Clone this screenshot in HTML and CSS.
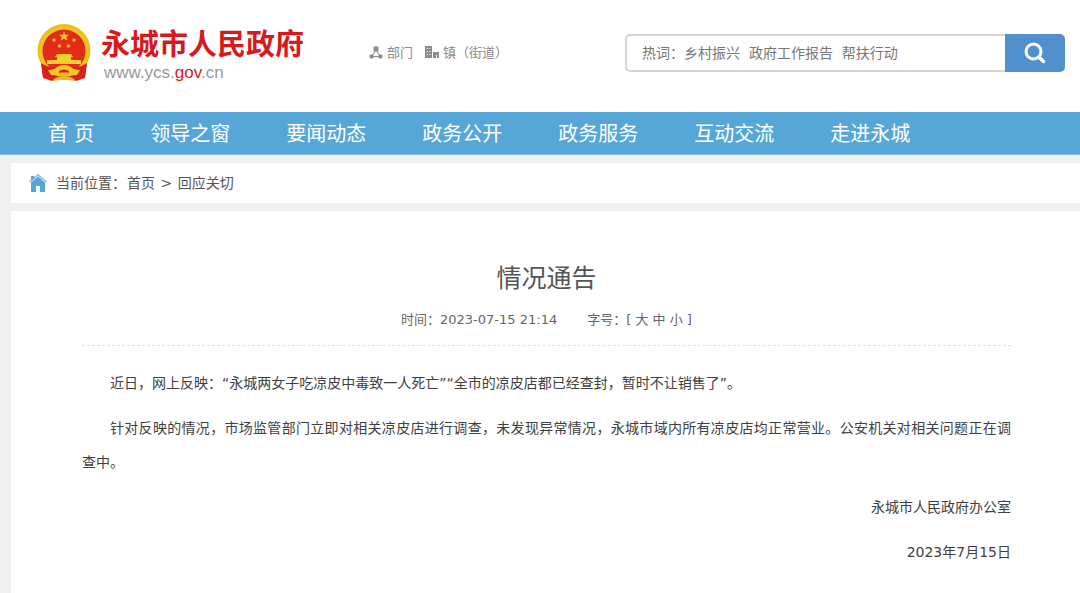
FILE: index.html
```html
<!DOCTYPE html>
<html lang="zh-CN">
<head>
<meta charset="utf-8">
<meta name="viewport" content="width=device-width, initial-scale=1">
<title>情况通告 - 永城市人民政府</title>
<link rel="stylesheet" href="styles.css">
</head>
<body>
<header class="header">
  <a class="brand" href="#">
    <svg class="emblem" viewBox="0 0 54 58" aria-hidden="true">
      <path d="M4 37L6 54 15 57 27 54 39 57 48 54 50 37Z" fill="#d9201a"/>
      <circle cx="27" cy="26.500" r="26.500" fill="#f2c420"/>
      <circle cx="27" cy="26.500" r="25" fill="none" stroke="#e9b922" stroke-width="1"/>
      <circle cx="27" cy="27" r="21.500" fill="#e22b18"/>
      <path d="M27 7l1.300 3.700h3.900l-3.100 2.300 1.200 3.700-3.300-2.200-3.300 2.200 1.200-3.700-3.100-2.300h3.900z" fill="#f6c62b"/>
      <g fill="#eeb32a"><circle cx="17" cy="16" r="1.800"/><circle cx="37" cy="16" r="1.800"/><circle cx="22.500" cy="22" r="1.800"/><circle cx="31.500" cy="22" r="1.800"/></g>
      <path d="M20 30h14l2 3h-2v3h10v4H10v-4h10v-3h-2z" fill="#f8d02e"/>
      <path d="M4 39q7 5 14 4l2 5-5 6-9-1zM50 39q-7 5-14 4l-2 5 5 6 9-1z" fill="#d9201a"/>
      <path d="M11 46q6 0 9-3 7-4 14 0 3 3 9 3l-3 5q-5 1-8-2-5-3-10 0-3 3-8 2z" fill="#f3c725"/>
      <path d="M22 47q5-3 10 0v2q-5-2-10 0z" fill="#d9201a"/>
      <path d="M15 57q3-4 8-4h8q5 0 8 4l-7-1h-10z" fill="#efbd21"/>
    </svg>
    <span class="brand-text">
      <span class="brand-name">永城市人民政府</span>
      <span class="brand-url">www.ycs.<span class="brand-gov">gov</span>.cn</span>
    </span>
  </a>
  <div class="quick">
    <a class="quick-link" href="#">
      <svg class="quick-icon" viewBox="0 0 14 14" aria-hidden="true"><path d="M7 4L3 10M7 4l4 6M3 10.500h8" fill="none" stroke="#8c8c8c" stroke-width="1"/><path d="M5.500 1.500h3v3h-3zM1.500 9.500h2v2h-2zM10.500 9.500h2v2h-2z" fill="#8c8c8c" stroke="#8c8c8c" stroke-width="2" stroke-linejoin="round"/></svg>
      部门
    </a>
    <a class="quick-link" href="#">
      <svg class="quick-icon" viewBox="0 0 14 14" aria-hidden="true"><path d="M0 0h7v12H0zM8 6h6v6h-2V9h-1v3H8z" fill="#8c8c8c"/><path d="M1.500 2.500h4M1.500 5.500h4M1.500 8.500h4" stroke="#ddd" stroke-width="1" stroke-dasharray="1.500 1"/></svg>
      镇（街道）
    </a>
  </div>
  <form class="search" role="search">
    <input class="search-input" type="text" aria-label="搜索" value="热词：乡村振兴  政府工作报告  帮扶行动">
    <button class="search-button" type="button" aria-label="搜索">
      <svg class="search-icon" viewBox="0 0 22 22" aria-hidden="true"><circle cx="9.500" cy="9.500" r="7.500" fill="none" stroke="#fff" stroke-width="3"/><path d="M15 15l4.500 4.500" stroke="#fff" stroke-width="3.500" stroke-linecap="round"/></svg>
    </button>
  </form>
</header>
<nav class="nav">
  <a class="nav-link" href="#">首 页</a>
  <a class="nav-link" href="#">领导之窗</a>
  <a class="nav-link" href="#">要闻动态</a>
  <a class="nav-link" href="#">政务公开</a>
  <a class="nav-link" href="#">政务服务</a>
  <a class="nav-link" href="#">互动交流</a>
  <a class="nav-link" href="#">走进永城</a>
</nav>
<main class="page">
  <div class="crumbs">
    <svg class="home-icon" viewBox="0 0 18 18" aria-hidden="true"><path d="M.5 8L9 1l8.500 7" fill="none" stroke="#7dbbe1" stroke-width="1.500"/><path d="M2 2h3v3L2 7z" fill="#56a7d8"/><path d="M9 2.500l7.500 6.500H16v9h-5v-6H7v6H2V9h-.5z" fill="#56a7d8"/></svg>
    <span>当前位置：<a class="crumb" href="#">首页</a> &gt; <a class="crumb" href="#">回应关切</a></span>
  </div>
  <article class="article">
    <h1 class="title">情况通告</h1>
    <div class="meta">
      <span>时间：2023-07-15 21:14</span>
      <span class="sizes">字号：[ <button class="size" type="button">大</button> <button class="size" type="button">中</button> <button class="size" type="button">小</button> ]</span>
    </div>
    <div class="body">
      <p class="para">近日，网上反映：“永城两女子吃凉皮中毒致一人死亡”“全市的凉皮店都已经查封，暂时不让销售了”。</p>
      <p class="para">针对反映的情况，市场监管部门立即对相关凉皮店进行调查，未发现异常情况，永城市域内所有凉皮店均正常营业。公安机关对相关问题正在调<span class="keep">查中。</span></p>
      <p class="sign">永城市人民政府办公室</p>
      <p class="sign">2023年7月15日</p>
    </div>
  </article>
</main>
</body>
</html>
```
FILE: styles.css
```css
* {
  box-sizing: border-box;
}

body {
  margin: 0;
  min-height: 100vh;
  display: flex;
  flex-direction: column;
  background: #f1f1f1;
  color: #404040;
  font: 14px/20px "DejaVu Sans", "Noto Sans CJK SC", sans-serif;
}

a {
  color: inherit;
  text-decoration: none;
}

button,
input {
  font: inherit;
  color: inherit;
}

.header {
  display: flex;
  align-items: center;
  padding: 23px 15px 29px 37px;
  background: #fff;
}

.brand {
  display: flex;
  align-items: center;
  gap: 10px;
  height: 60px;
}

.emblem {
  width: 54px;
  height: 58px;
}

.brand-text {
  display: flex;
  flex-direction: column;
}

.brand-name {
  color: #d7191d;
  font-size: 29px;
  line-height: 40px;
  font-weight: 700;
}

.brand-url {
  padding-left: 3px;
  color: #999;
  font: 17px/16px "Liberation Sans", sans-serif;
}

.brand-gov {
  color: #d7191d;
}

.quick {
  display: flex;
  gap: 12px;
  margin-left: 65px;
  color: #8c8c8c;
  font-size: 13px;
}

.quick-link {
  display: flex;
  align-items: center;
  gap: 4px;
}

.quick-icon {
  width: 14px;
  height: 14px;
}

.search {
  display: flex;
  width: 440px;
  height: 38px;
  margin-left: auto;
}

.search-input {
  flex: 1;
  min-width: 0;
  padding: 0 15px;
  border: 2px solid #d6d6d6;
  border-right: 0;
  border-radius: 5px 0 0 5px;
  background: #fff;
  color: #777;
}

.search-button {
  display: flex;
  align-items: center;
  justify-content: center;
  width: 60px;
  padding: 0;
  border: 0;
  border-radius: 0 5px 5px 0;
  background: #5091cd;
}

.search-icon {
  width: 22px;
  height: 22px;
}

.nav {
  display: flex;
  padding: 2px 20px 0;
  border-bottom: 1px solid #84bde1;
  background: #56a7d8;
  color: #fff;
  font-size: 20px;
  line-height: 40px;
}

.nav-link {
  padding: 0 28px;
}

.page {
  flex: 1;
  display: flex;
  flex-direction: column;
  gap: 8px;
  padding: 8px 0 0 11px;
}

.crumbs {
  display: flex;
  align-items: center;
  gap: 9px;
  padding: 10px 18px;
  background: #fff;
  color: #555;
}

.crumb {
  padding: 0 1px;
}

.home-icon {
  width: 18px;
  height: 18px;
}

.article {
  flex: 1;
  padding: 50px 69px 24px 71px;
  background: #fff;
}

.title {
  margin: 0;
  color: #555;
  font-size: 25px;
  line-height: 36px;
  font-weight: 400;
  text-align: center;
}

.meta {
  display: flex;
  justify-content: center;
  gap: 30px;
  padding: 11px 0 13px;
  border-bottom: 1px dashed #e0e0e0;
  color: #666;
  font-size: 13px;
  line-height: 24px;
}

.size {
  padding: 0;
  border: 0;
  background: none;
}

.body {
  padding-top: 20px;
}

.para,
.sign {
  margin: 0 0 11px;
  line-height: 34px;
}

.para {
  text-indent: 2em;
  text-align: justify;
}

.keep {
  white-space: nowrap;
}

.sign {
  text-align: right;
}
```
